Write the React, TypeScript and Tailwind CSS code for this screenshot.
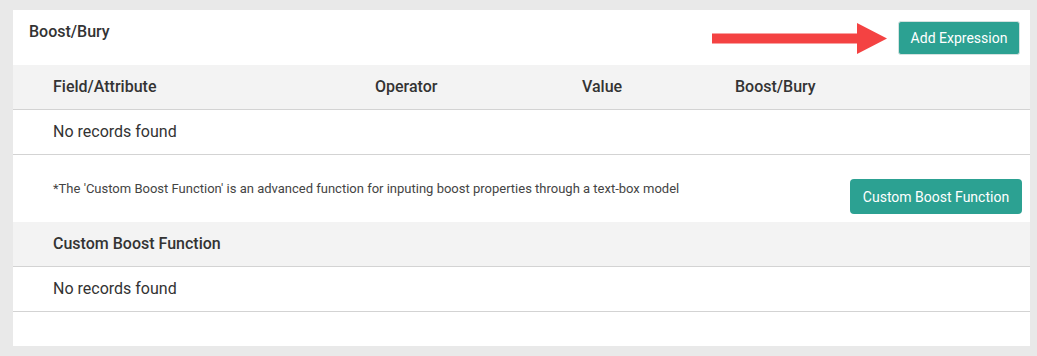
const font = { fontFamily: 'Roboto, "Liberation Sans", sans-serif' }

const columns = ['Field/Attribute', 'Operator', 'Value', 'Boost/Bury']

function Arrow() {
  return (
    <svg width="176" height="31" viewBox="0 0 176 31" className="block">
      <rect x="0" y="10.5" width="146" height="10" fill="#f44242" />
      <polygon points="145,0 175,15.5 145,31" fill="#f44242" />
    </svg>
  )
}

function EmptyRow() {
  return (
    <div className="h-[45px] flex items-center pl-10 border-b border-[#d3d3d3] text-[16px] text-[#333]">
      No records found
    </div>
  )
}

export default function App() {
  return (
    <div className="min-h-[356px] bg-[#e9e9e9] pt-[10px] pl-[13px] pr-[7px] pb-[10px]" style={font}>
      <div className="bg-white h-[336px] flex flex-col">
        {/* Panel title + primary action */}
        <div className="h-[55px] flex items-start justify-between">
          <div className="pl-4 pt-[10px] text-[16px] font-medium text-[#333]">Boost/Bury</div>
          <div className="flex items-center gap-[10px] pt-[11px] pr-[10px]">
            <Arrow />
            <button className="h-[34px] w-[122px] rounded-[3px] bg-[#2ca192] border border-[#d4e2e0] text-white text-[14px] leading-none">
              Add Expression
            </button>
          </div>
        </div>

        {/* Expression table */}
        <div className="h-[45px] grid grid-cols-[362px_207px_153px_1fr] items-center bg-[#f3f3f3] border-b border-[#d3d3d3] text-[16px] font-medium text-[#333]">
          {columns.map((c, i) => (
            <div key={c} className={i === 0 ? 'pl-10' : ''}>
              {c}
            </div>
          ))}
        </div>
        <EmptyRow />

        {/* Custom boost note */}
        <div className="h-[67px] flex items-start justify-between">
          <p className="pl-10 pt-[24px] text-[13px] text-[#444]">
            *The 'Custom Boost Function' is an advanced function for inputing boost properties through a text-box model
          </p>
          <button className="mt-[24px] mr-2 h-[35px] w-[172px] rounded-[4px] bg-[#2ca192] text-white text-[14px] leading-none">
            Custom Boost Function
          </button>
        </div>

        {/* Custom boost table */}
        <div className="h-[45px] flex items-center pl-10 bg-[#f3f3f3] border-b border-[#d3d3d3] text-[16px] font-medium text-[#333]">
          Custom Boost Function
        </div>
        <EmptyRow />
      </div>
    </div>
  )
}
